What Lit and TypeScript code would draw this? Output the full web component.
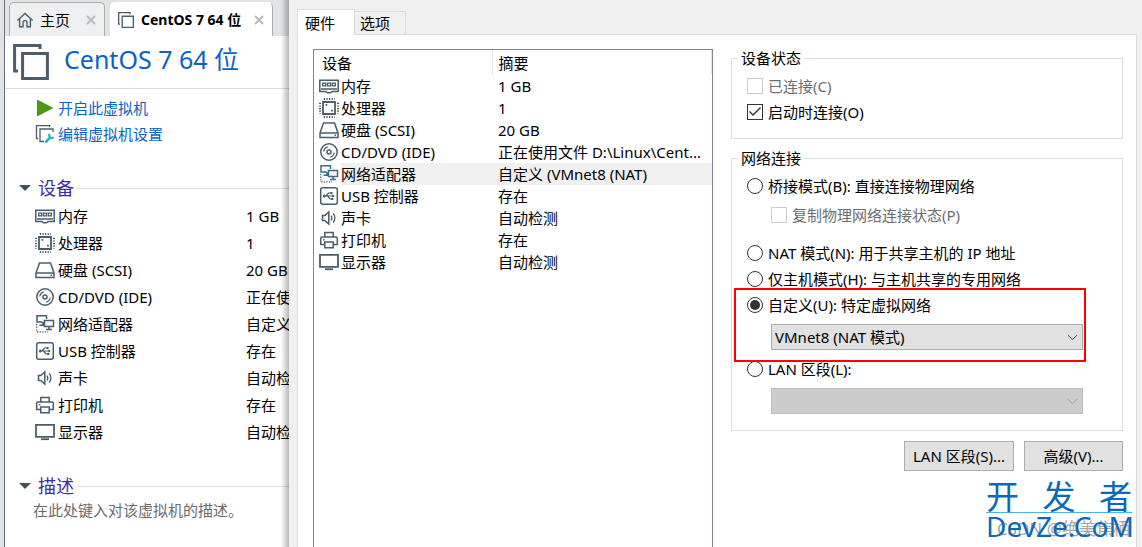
import { LitElement, html, svg, css, nothing } from "lit";
import { customElement, property } from "lit/decorators.js";
import { classMap } from "lit/directives/class-map.js";

interface Device {
  icon: string;
  name: string;
  summary: string;
  detail?: string;
}

const DEVICES: Device[] = [
  { icon: "memory", name: "内存", summary: "1 GB" },
  { icon: "cpu", name: "处理器", summary: "1" },
  { icon: "disk", name: "硬盘 (SCSI)", summary: "20 GB" },
  { icon: "cd", name: "CD/DVD (IDE)", summary: "正在使用文件 D:\\Linux\\Cent..." },
  { icon: "network", name: "网络适配器", summary: "自定义 (VMnet8 (NAT)", detail: "自定义 (VMnet8)" },
  { icon: "usb", name: "USB 控制器", summary: "存在" },
  { icon: "sound", name: "声卡", summary: "自动检测" },
  { icon: "printer", name: "打印机", summary: "存在" },
  { icon: "display", name: "显示器", summary: "自动检测" },
];

const ICONS: Record<string, unknown> = {
  memory: svg`<path d="M.8 4.300h18.400v11.200h-6.200l-1.500 1.300h-3L7 15.500H.8z"/><path stroke-width="1.300" d="M3.700 7.200h3v2.600h-3zM8.500 7.200h3v2.600h-3zM13.300 7.200h3v2.600h-3zM2 13h16"/>`,
  cpu: svg`<path stroke-width="1.800" d="M4 4h12v12H4z"/><path stroke-dasharray="1.200 1.400" stroke-width="2" d="M4.800 1h11M4.800 19h11M1 4.800v11M19 4.800v11"/><path fill="currentColor" stroke="none" d="M6.500 6h1.800v1.800H6.500zM12 11.700h1.800v1.800H12z"/>`,
  disk: svg`<path d="M1 13 4.500 3h11L19 13v4.500H1zM1 13h18M15.500 15.300h1.500"/>`,
  cd: svg`<circle cx="10" cy="10" r="8.200"/><circle cx="10" cy="10" r="2"/><path stroke-width="1.200" d="M4.800 9.500c.3-2.300 1.800-4 4-4.600M15.200 10.500c-.3 2.300-1.800 4-4 4.600"/>`,
  network: svg`<path d="M11.500 5V1.800H2V8h5.500M8 8v3M4.500 11.200H9M9.500 6.500h9v6h-9z"/><path d="M14 12.500v3M11 15.500h6"/><path stroke-dasharray="1.300 1.300" stroke-width="1.200" d="M1.700 10v8M2 17.800h11"/>`,
  usb: svg`<rect x="1.700" y="1.700" width="16.600" height="16.600" rx="2"/><path stroke-width="1.200" d="M5 10h10M7 10l2.500-3H12M8.500 10l2.500 3h2"/><path fill="currentColor" stroke="none" d="M15.800 10l-2.500-1.700v3.400zM3.800 10a1.500 1.500 0 1 0 3 0 1.500 1.500 0 1 0-3 0M11.500 6h2v2h-2zM12.300 12h2v2h-2z"/>`,
  sound: svg`<path d="M3.500 7.500h2.300l4-3.500v12l-4-3.500H3.500z"/><path stroke-width="1.300" d="M12 7.500c1 1.500 1 3.500 0 5M14.200 5.500c2.200 2.500 2.200 6.500 0 9"/>`,
  printer: svg`<path d="M5.800 7V2.500h8.400V7M5.800 14.500H1.700V8.300q0-1.300 1.300-1.300h14q1.300 0 1.300 1.300v6.200h-4.100M5.800 12h8.400v5.700H5.800zM4 9.700h1.500"/>`,
  display: svg`<path stroke-width="1.800" d="M1 2.900h18v12H1z"/><path d="M6 17.200h8" stroke-width="1.800"/>`,
  vm: svg`<path d="M3.500 14.500H1.800V1.800h12.700v1.700M5.800 5.800h12.400v12.400H5.800z"/>`,
  edit: svg`<path stroke-width="1.300" d="M3 14.500H1.500V1.700h13V3M9 17.500H5V5h13v3"/><path stroke="#12b5d4" stroke-width="2.600" d="M10.500 18.500l5-5.500"/><path stroke="#12b5d4" stroke-width="2" d="M14.800 9.800c-1 1.500-.6 2.800.3 3.700 1 .9 2.600.8 3.600-.3"/>`,
  home: svg`<path d="M1.500 10.500 10 2.700l8.500 7.800M4 9v8.500h3.800v-4.800q0-2 2.200-2t2.200 2v4.800H16V9"/>`,
  play: svg`<path fill="#4a9a12" stroke="none" d="M2 1.500 18.500 10 2 18.500z"/>`,
};

@customElement("vm-icon")
class VmIcon extends LitElement {
  @property() name = "";
  static styles = css`
    :host { display: block; width: 20px; height: 20px; color: #4a5d69; }
    svg { display: block; width: 100%; height: 100%; fill: none; stroke: currentColor; stroke-width: 1.5; }
  `;
  render() {
    return html`<svg viewBox="0 0 20 20" aria-hidden="true">${ICONS[this.name]}</svg>`;
  }
}

@customElement("vm-library")
class VmLibrary extends LitElement {
  static styles = css`
    :host {
      display: flex; flex-direction: column; position: relative; overflow: hidden;
      background: #fff; border-left: 1px solid #6f7377; color: #000;
    }
    :host::after {
      content: ""; position: absolute; inset: 0 0 0 auto; width: 8px;
      background: linear-gradient(to right, transparent, rgba(0, 0, 0, 0.28));
    }
    .tabs { display: flex; gap: 5px; height: 36px; padding: 2px 4px 0; background: #e1e4e6; box-sizing: border-box; }
    .tab {
      display: flex; align-items: center; height: 34px; min-width: 96px; padding: 0 7px 0 6px; box-sizing: border-box; white-space: nowrap;
      border: 1px solid #a9adb0; border-bottom: 0; border-radius: 5px 5px 0 0; background: #eeeff0;
    }
    .tab.active { min-width: 163px; background: #fff; border-color: #fff #a9adb0 #fff #fff; font-weight: 700; font-size: 14px; }
    .tab vm-icon { width: 18px; height: 18px; margin-right: 6px; }
    .close { border: 0; background: none; padding: 0; width: 12px; height: 12px; margin-left: auto; }
    .close svg { display: block; fill: none; stroke: #bcbcbc; stroke-width: 2; }
    .title { display: flex; align-items: center; gap: 13px; height: 52px; padding-left: 6px; border-bottom: 1px solid #dcdcdc; }
    .title vm-icon { width: 40px; height: 40px; }
    h1 { margin: 0; padding-bottom: 6px; font-size: 25px; line-height: 34px; font-weight: 400; color: #0b62c6; white-space: nowrap; }
    .actions { padding: 6px 0 0 30px; }
    .actions a { display: flex; align-items: center; gap: 3px; height: 26px; color: #0b62c6; text-decoration: none; white-space: nowrap; }
    h2 { display: flex; align-items: center; margin: 0; height: 28px; padding-left: 14px; font-size: 18px; font-weight: 400; color: #3d2c9e; white-space: nowrap; }
    h2::before { content: ""; border: 6px solid transparent; border-top-color: #41525c; border-bottom: 0; margin-right: 7px; }
    h2::after { content: ""; flex: 1; height: 1px; margin-left: 3px; background: #dcdcdc; }
    .devices { margin-top: 27px; }
    .notes { margin-top: 27px; }
    table { border-collapse: collapse; margin-left: 30px; table-layout: fixed; width: 258px; }
    .c-icon { width: 23px; }
    .c-name { width: 188px; }
    td, th { padding: 0; height: 27px; text-align: left; font-weight: 400; white-space: nowrap; }
    p { margin: 0; padding-left: 28px; line-height: 20px; color: #6c6c6c; }
  `;

  private close(label: string) {
    return html`<button class="close" aria-label=${label}>
      <svg width="12" height="12" viewBox="0 0 12 12"><path d="M2 2l8 8M10 2l-8 8" /></svg>
    </button>`;
  }

  render() {
    return html`
      <div class="tabs">
        <div class="tab"><vm-icon name="home"></vm-icon>主页${this.close("关闭主页")}</div>
        <div class="tab active"><vm-icon name="vm"></vm-icon>CentOS 7 64 位${this.close("关闭虚拟机")}</div>
      </div>
      <header class="title"><vm-icon name="vm"></vm-icon><h1>CentOS 7 64 位</h1></header>
      <nav class="actions">
        <a href="#"><vm-icon name="play"></vm-icon>开启此虚拟机</a>
        <a href="#"><vm-icon name="edit"></vm-icon>编辑虚拟机设置</a>
      </nav>
      <section class="devices">
        <h2>设备</h2>
        <table>
          <colgroup><col class="c-icon" /><col class="c-name" /><col /></colgroup>
          <tbody>
            ${DEVICES.map((d) => html`<tr>
              <td><vm-icon name=${d.icon}></vm-icon></td>
              <th scope="row">${d.name}</th>
              <td>${d.detail ?? d.summary}</td>
            </tr>`)}
          </tbody>
        </table>
      </section>
      <section class="notes">
        <h2>描述</h2>
        <p>在此处键入对该虚拟机的描述。</p>
      </section>
    `;
  }
}

@customElement("settings-dialog")
class SettingsDialog extends LitElement {
  static styles = css`
    :host { display: flex; flex-direction: column; min-width: 0; padding: 9px 5px 0 8px; background: #f0f0f0; color: #000; }
    button, select, input { font: inherit; color: inherit; margin: 0; }
    .tabs { display: flex; align-items: flex-end; height: 25px; }
    .tab {
      padding: 0 15px 0 5px; height: 23px; border: 1px solid #dcdcdc; border-left: 0; border-bottom: 0;
      background: #f0f0f0; box-sizing: border-box; line-height: 22px; white-space: nowrap;
    }
    .tab.active { height: 26px; margin-bottom: -1px; padding: 0 19px 0 7px; border-left: 1px solid #dcdcdc; background: #fff; position: relative; }
    .panel { flex: 1; display: flex; gap: 18px; padding: 14px 13px 0 15px; background: #fff; border: 1px solid #dcdcdc; border-bottom: 0; }
    .list { flex: 1 1 400px; min-width: 0; box-sizing: border-box; border: 1px solid #828790; border-bottom: 0; }
    table { width: 100%; border-collapse: collapse; table-layout: fixed; }
    .c-icon { width: 27px; }
    .c-name { width: 151px; }
    th, td { padding: 0; height: 22px; text-align: left; font-weight: 400; white-space: nowrap; overflow: hidden; }
    thead th { height: 25px; padding-left: 8px; border-right: 1px solid #e5e5e5; }
    thead th + th { padding-left: 6px; }
    td:last-child { padding-left: 6px; text-overflow: ellipsis; }
    td vm-icon { margin-left: 5px; }
    .selected th, .selected td:last-child { background: #f0f0f0; }
    .selected vm-icon { color: #3a6b8c; }
    .side { flex: 1 1 392px; min-width: 0; padding-bottom: 20px; margin-top: -1px; }
    fieldset { position: relative; margin: 0 0 9px; min-width: 0; border: 1px solid #dcdcdc; padding: 5px 39px 13px 15px; }
    fieldset.network { padding-bottom: 16px; margin-bottom: 10px; }
    legend { margin-left: -9px; padding: 0 3px; height: 20px; line-height: 20px; }
    .row { display: flex; align-items: center; gap: 5px; height: 26px; white-space: nowrap; }
    .sub { margin-left: 24px; }
    .row.sub { margin-top: 3px; margin-bottom: 12px; }
    .off { color: #6d6d6d; }
    input { appearance: none; display: grid; place-content: center; flex: none; width: 16px; height: 16px; border: 1px solid #333; background: #fff; }
    input[type="radio"] { border-radius: 50%; }
    input[type="radio"]:checked::before { content: ""; width: 10px; height: 10px; border-radius: 50%; background: #333; }
    input[type="checkbox"]:checked::before {
      content: ""; width: 12px; height: 10px; background: #333;
      clip-path: polygon(0 5px, 1px 4px, 4px 7px, 11px 0, 12px 1px, 4px 9px);
    }
    input:disabled { border-color: #ccc; }
    .combo { display: grid; align-items: center; margin: 6px 0 6px 24px; }
    .combo > * { grid-area: 1 / 1; }
    .combo svg { justify-self: end; margin-right: 5px; fill: none; stroke: #444; pointer-events: none; }
    .combo.off svg { stroke: #a0a0a0; }
    .combo.off { margin-bottom: 0; }
    select { appearance: none; width: 100%; height: 26px; padding: 0 24px 0 3px; border: 1px solid #adadad; border-radius: 0; background: #e1e1e1; }
    select:disabled { background: #ccc; border-color: #bfbfbf; opacity: 1; }
    .mark { position: absolute; inset: 120px 36px auto 2px; height: 74px; box-sizing: border-box; border: 2px solid #f00; pointer-events: none; }
    .buttons { display: flex; justify-content: flex-end; gap: 10px; }
    .buttons button { height: 30px; width: 99px; padding: 0; border: 1px solid #adadad; background: #e1e1e1; white-space: nowrap; }
    .buttons .lan { width: 110px; }
  `;

  private option(type: string, id: string, label: string, o: { checked?: boolean; disabled?: boolean; sub?: boolean } = {}) {
    return html`<div class=${classMap({ row: true, sub: !!o.sub, off: !!o.disabled })}>
      <input type=${type} id=${id} name=${type === "radio" ? "mode" : id} ?checked=${o.checked} ?disabled=${o.disabled} />
      <label for=${id}>${label}</label>
    </div>`;
  }

  private combo(label: string, value: string, disabled = false) {
    return html`<div class=${classMap({ combo: true, off: disabled })}>
      <select aria-label=${label} ?disabled=${disabled}>${value ? html`<option>${value}</option>` : nothing}</select>
      <svg width="11" height="7" viewBox="0 0 11 7"><path d="M.8 1l4.700 4.700L10.200 1" /></svg>
    </div>`;
  }

  render() {
    return html`
      <div class="tabs" role="tablist">
        <button class="tab active" role="tab" aria-selected="true">硬件</button>
        <button class="tab" role="tab" aria-selected="false">选项</button>
      </div>
      <div class="panel">
        <div class="list">
          <table>
            <colgroup><col class="c-icon" /><col class="c-name" /><col /></colgroup>
            <thead><tr><th colspan="2">设备</th><th>摘要</th></tr></thead>
            <tbody>
              ${DEVICES.map((d) => html`<tr class=${classMap({ selected: d.icon === "network" })}>
                <td><vm-icon name=${d.icon}></vm-icon></td>
                <th scope="row">${d.name}</th>
                <td>${d.summary}</td>
              </tr>`)}
            </tbody>
          </table>
        </div>
        <div class="side">
          <fieldset>
            <legend>设备状态</legend>
            ${this.option("checkbox", "connected", "已连接(C)", { disabled: true })}
            ${this.option("checkbox", "poweron", "启动时连接(O)", { checked: true })}
          </fieldset>
          <fieldset class="network">
            <legend>网络连接</legend>
            ${this.option("radio", "bridged", "桥接模式(B): 直接连接物理网络")}
            ${this.option("checkbox", "replicate", "复制物理网络连接状态(P)", { disabled: true, sub: true })}
            ${this.option("radio", "nat", "NAT 模式(N): 用于共享主机的 IP 地址")}
            ${this.option("radio", "host", "仅主机模式(H): 与主机共享的专用网络")}
            ${this.option("radio", "custom", "自定义(U): 特定虚拟网络", { checked: true })}
            ${this.combo("特定虚拟网络", "VMnet8 (NAT 模式)")}
            ${this.option("radio", "lan", "LAN 区段(L):")}
            ${this.combo("LAN 区段", "", true)}
            <div class="mark"></div>
          </fieldset>
          <div class="buttons">
            <button class="lan">LAN 区段(S)...</button>
            <button>高级(V)...</button>
          </div>
        </div>
      </div>
    `;
  }
}

@customElement("app-root")
class AppRoot extends LitElement {
  static styles = css`
    :host {
      display: grid; grid-template-columns: 285px minmax(0, 1fr); position: relative;
      min-height: 100vh; padding-left: 4px; box-sizing: border-box; overflow: hidden; background: #e1e4e6;
      font: 15px/20px "Noto Sans", "Noto Sans CJK SC", sans-serif;
    }
    .brand { position: absolute; right: 10px; bottom: 8px; width: 146px; color: #0a69b8; }
    .cn { display: flex; justify-content: space-between; font-size: 33px; line-height: 30px; border-bottom: 1px solid #4db4ea; }
    .en { font-size: 28px; line-height: 26px; }
    .credit { position: absolute; right: 12px; bottom: 7px; color: #a6a6a6; font-size: 17px; line-height: 22px; white-space: nowrap; }
  `;
  render() {
    return html`
      <vm-library></vm-library>
      <settings-dialog></settings-dialog>
      <div class="credit">CSDN @绝美焦栖</div>
      <div class="brand">
        <div class="cn"><span>开</span><span>发</span><span>者</span></div>
        <div class="en">DevZe.CoM</div>
      </div>
    `;
  }
}
